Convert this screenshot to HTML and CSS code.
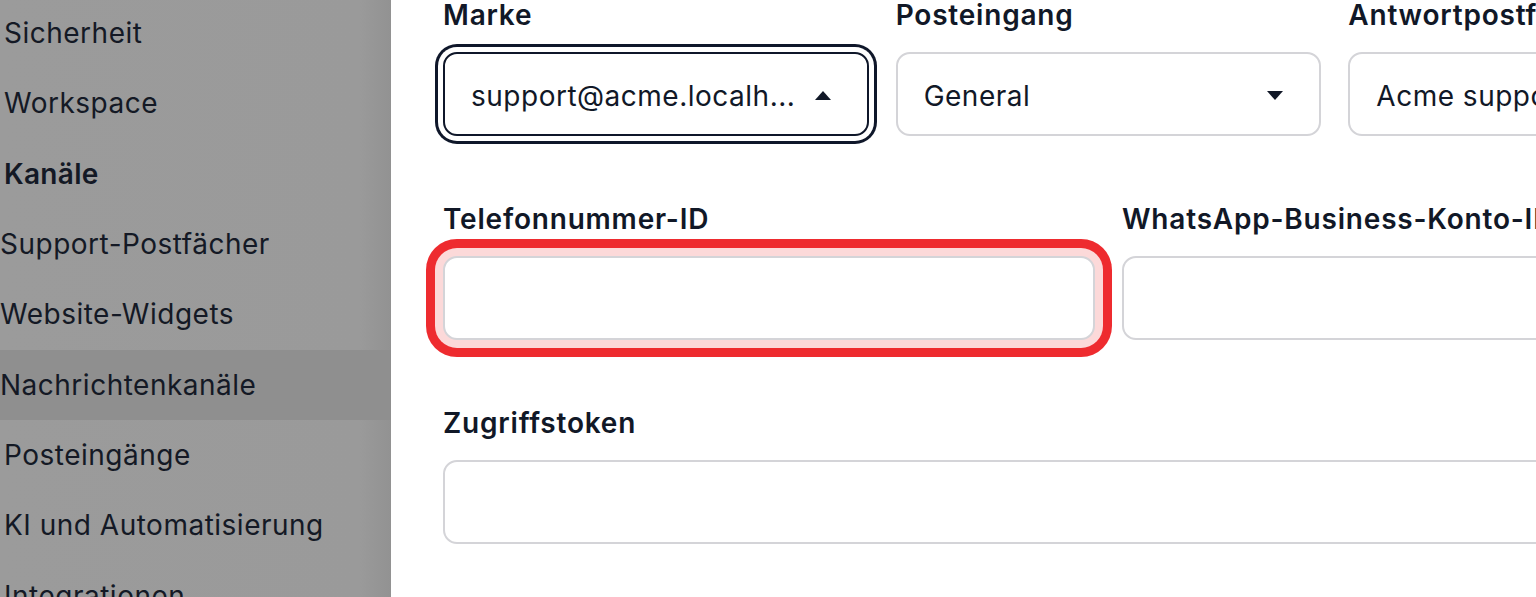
FILE: index.html
```html
<!DOCTYPE html>
<html lang="de">
<head>
    <meta charset="UTF-8">
    <title>Kanäle – Nachrichtenkanäle</title>
    <link rel="stylesheet" href="styles.css">
</head>
<body>
<div class="layout">
    <aside class="sidebar">
        <ul class="nav">
            <li class="nav_item">Sicherheit</li>
            <li class="nav_item">Workspace</li>
            <li class="nav_item nav_group">Kanäle</li>
            <li class="nav_item nav_sub">Support-Postfächer</li>
            <li class="nav_item nav_sub">Website-Widgets</li>
            <li class="nav_item nav_sub active">Nachrichtenkanäle</li>
            <li class="nav_item">Posteingänge</li>
            <li class="nav_item">KI und Automatisierung</li>
            <li class="nav_item">Integrationen</li>
        </ul>
    </aside>

    <main class="content">
        <form class="channel_form" action="">
            <div class="row row_3">
                <div class="field">
                    <label class="label">Marke</label>
                    <div class="select focused">
                        <span class="select_value">support@acme.localh...</span>
                        <span class="caret caret_up"></span>
                    </div>
                </div>
                <div class="field">
                    <label class="label">Posteingang</label>
                    <div class="select">
                        <span class="select_value">General</span>
                        <span class="caret"></span>
                    </div>
                </div>
                <div class="field">
                    <label class="label">Antwortpostfach</label>
                    <div class="select">
                        <span class="select_value">Acme support</span>
                        <span class="caret"></span>
                    </div>
                </div>
            </div>

            <div class="row row_2">
                <div class="field">
                    <label class="label">Telefonnummer-ID</label>
                    <input type="text" class="input highlight">
                </div>
                <div class="field">
                    <label class="label">WhatsApp-Business-Konto-ID</label>
                    <input type="text" class="input">
                </div>
            </div>

            <div class="row row_1">
                <div class="field">
                    <label class="label">Zugriffstoken</label>
                    <input type="text" class="input">
                </div>
            </div>
        </form>
    </main>
</div>
</body>
</html>
```

FILE: styles.css
```css
html, body {
    margin: 0;
    height: 100%;
    overflow: hidden;
}

body {
    font-family: Inter, "Noto Sans", "Liberation Sans", sans-serif;
    color: #111827;
    background-color: #ffffff;
}

.layout {
    display: flex;
    height: 100%;
}

/* sidebar */
.sidebar {
    flex: 0 0 391px;
    background: linear-gradient(to right, #9b9b9b 0, #9a9a9a 360px, #929292 391px);
    overflow: hidden;
}

.nav {
    list-style: none;
    margin: -2px 0 0 0;
    padding: 0;
}

.nav_item {
    height: 70.33px;
    line-height: 70px;
    padding-left: 4px;
    font-size: 28px;
    letter-spacing: 0.5px;
    color: #141925;
    white-space: nowrap;
}

.nav_group {
    font-weight: 600;
    letter-spacing: 0.3px;
}

.nav_sub {
    padding-left: 0;
}

.active {
    background-color: #8f8f8f;
}

/* form */
.content {
    flex: 1;
    padding-left: 52px;
    overflow: hidden;
}

.channel_form {
    width: 1331px;
    padding-top: 1px;
}

.row {
    display: grid;
    column-gap: 27px;
    margin-bottom: 69px;
}

.row_3 {
    grid-template-columns: repeat(3, 1fr);
}

.row_2 {
    grid-template-columns: repeat(2, 1fr);
}

.row_1 {
    grid-template-columns: 1fr;
}

.field {
    display: flex;
    flex-direction: column;
    gap: 23px;
}

.label {
    font-size: 28px;
    line-height: 28px;
    font-weight: 600;
    letter-spacing: 0.8px;
    color: #111827;
    white-space: nowrap;
}

.select,
.input {
    box-sizing: border-box;
    height: 84px;
    border: 2px solid #d4d4d8;
    border-radius: 14px;
    background-color: #ffffff;
}

.select {
    display: flex;
    align-items: center;
    justify-content: space-between;
    padding: 3px 36px 0 26px;
    font-size: 28px;
    letter-spacing: 0.5px;
    color: #111827;
    white-space: nowrap;
}

.focused {
    border-color: #0f172a;
    box-shadow: 0 0 0 5px #ffffff, 0 0 0 8px #0f172a;
}

.caret {
    width: 0;
    height: 0;
    border-left: 8px solid transparent;
    border-right: 8px solid transparent;
    border-top: 9px solid #111827;
}

.caret_up {
    border-top: 0;
    border-bottom: 9px solid #111827;
}

.input {
    width: 100%;
    padding: 0 26px;
    font: inherit;
    font-size: 28px;
    outline: none;
}

.highlight {
    box-shadow: 0 0 0 8px #fcd9d9, 0 0 0 17px #ee2b2f;
}
```
